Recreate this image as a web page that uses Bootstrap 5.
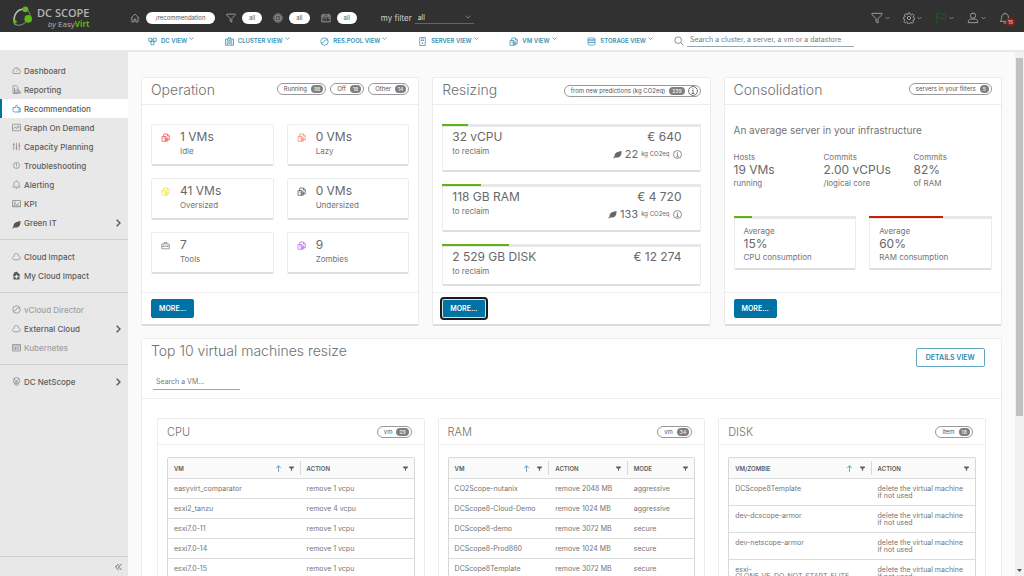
<!DOCTYPE html>
<html lang="en">
<head>
<meta charset="utf-8">
<meta name="viewport" content="width=device-width, initial-scale=1">
<title>DC Scope - Recommendation</title>
<link href="https://cdn.jsdelivr.net/npm/bootstrap@5.3.0/dist/css/bootstrap.min.css" rel="stylesheet">
<style>
:root{--ink:#565656;--line:#ececec;--blue:#0072a3}
body{font-family:Inter,"Liberation Sans",sans-serif;font-size:8px;line-height:14px;color:#747474;background:#fafafa}
.ico{width:9px;height:9px;fill:none;stroke:currentColor;stroke-width:3;flex:none;display:block}
a{color:inherit;text-decoration:none}
button{font-family:inherit}
/* top bar */
.topbar{background:#313131;height:32px;padding:3px 8px 0 12px;color:#a8a8a8}
.brand{width:118px;color:#b5b5b5;font-family:"Open Sans",sans-serif}
.brand-name{font-size:11px;line-height:13px;font-weight:600}
.brand-by{font-size:8px;line-height:10px;text-align:right}
.brand-by b{color:#5eb715}
.crumb{background:#fff;color:#565656;border-radius:6px;height:12px;line-height:12px;font-size:6px;padding:0 7px;margin:0 11px 0 6px;text-align:center}
.crumb-path{min-width:69px}
.crumb-icon{width:10px;height:10px}
.filter-label{font-size:8px;color:#d0d0d0;margin:0 3px 0 13px}
.filter-select{appearance:none;background:transparent url("data:image/svg+xml,%3Csvg xmlns='http://www.w3.org/2000/svg' viewBox='0 0 10 6' fill='none' stroke='%23bbb'%3E%3Cpath d='M1 1l4 4 4-4'/%3E%3C/svg%3E") no-repeat right 3px center/6px 4px;border:0;border-bottom:1px solid #5f666b;color:#ddd;font-size:7px;width:59px;height:13px;padding:0 3px}
.tool{background:none;border:0;padding:0;color:#9c9c9c;width:32px}
.tool .ico{width:12px;height:12px}
.tool .caret{width:5px;height:4px;margin-left:2px}
.tool-alerts{width:17px}
.alerts{background:#8d2012;color:#ddd;font-size:5px;line-height:8px;border-radius:4px;padding:0 2px;left:7px;top:6px}
.flag-on{color:#1f5a22}
/* view bar */
.viewbar{background:#fff;height:20px;border-bottom:2px solid #e9e9e9;padding-left:148px;color:#3b8fb3}
.viewbar a{font-size:6px;font-weight:600;line-height:18px;gap:4px}
.viewbar .caret{width:5px;height:3px;margin-bottom:5px;margin-left:-2px}
.view-links{width:505px}
.search-icon{width:10px;height:10px;margin-left:21px;color:#777}
.line-input{border:0;border-bottom:1px solid #9aa6ab;background:transparent;color:#666;padding:0 3px;border-radius:0;font-size:7px}
.line-input::placeholder{color:#7a7a7a;opacity:1}
.search-all{width:167px;height:12px;margin:0 0 1px 3px;padding-right:12px}
.vm-search{width:87px;margin:12px 0 0 2px}
/* side menu */
.side{width:128px;background:#e8e8e8;color:#5c5c5c}
.side-group{padding:7px 0;border-bottom:1px solid #d0d0d0}
.side-group:first-child{padding-top:9px}
.side-group.last-group{border:0}
.side-group a{height:19px;font-size:8px;font-weight:500;padding:0 6px 0 12px;gap:3px}
.side-group a.active{background:#fff;border-left:2px solid var(--blue);padding-left:10px}
.side-group a.active .ico{color:#3b8fb3}
.side-group a .ico{color:#8a8a8a}
.side-group a .dark{color:#565656}
.side-group a .chev{width:8px;height:8px;stroke-width:1;color:#565656}
.side-group a.off{color:#a0a0a0}
.side-foot{height:20px;border-top:1px solid #d0d0d0;padding:0 6px}
.side-foot .ico{width:7px;height:8px;stroke-width:1}
/* content */
.content{padding:25px 13px;overflow-y:auto;scrollbar-width:none}
.content::-webkit-scrollbar{display:none}
.deck{gap:13px}
.panel{background:#fff;border:1px solid var(--line);border-bottom:2px solid #dcdcdc;border-radius:2px;flex:1 1 0;min-width:0}
.panel-head{padding:0 9px;height:27px;border-bottom:1px solid var(--line)}
.panel-title{font-size:14px;line-height:24px;font-weight:300;color:#707070;margin:0}
.panel-body{padding:19px 9px 18px}
.panel-foot{padding:6px 9px;border-top:1px solid var(--line)}
.pill{border:1px solid #999;border-radius:6px;height:12px;line-height:10px;font-size:6px;padding:0 2px 0 6px;color:#565656;gap:4px}
.pill i{font-style:normal;background:#808080;color:#fff;border-radius:4px;font-size:5px;line-height:8px;padding:0 3px}
.pill .ico{margin-left:-1px;width:10px;height:10px}
.act{font-size:7px;font-weight:600;line-height:17px;padding:0 7px;border:1px solid var(--blue);border-radius:2px;background:var(--blue);color:#fff;min-width:43px}
.act.focused{outline:2px solid #1b1b1b;outline-offset:0;border-color:#cfe3ec}
.act.hollow{background:#fff;color:#2d88ae;border-color:#5fa6c3;min-width:69px;margin-top:9px}
.tiles{display:grid;grid-template-columns:1fr 1fr;gap:12px 13px}
.tile{border:1px solid var(--line);border-bottom:2px solid #dedede;border-radius:2px;background:#fff}
.tile-pad{padding:5px 9px}
.tile-icon{width:19px;padding-top:3px}
.vm-red{color:#f54f47}.vm-orange{color:#ff8a65}.vm-yellow{color:#f5e63a}.vm-grey{color:#565656}.vm-soft{color:#808080}.vm-violet{color:#b56cf0}
.figure-lg{font-size:12px;line-height:14px;color:#686868}
.cap{font-size:8px;line-height:15px}
.meter{height:3px;background:#e8e8e8;margin:-1px -1px 0}
.meter span{display:block;height:2px;background:#60b515}
.meter .hot{background:#c92100}
.gain{padding:3px 18px 6px 9px}
.co2{line-height:20px;gap:3px;color:#686868}
.co2 .figure-lg{font-size:11px}
.co2 small{font-size:6px}
.stack{gap:12px}
.lead-line{font-size:10px;line-height:12px;margin:0 0 15px}
.facts{margin-bottom:27px}
.facts>div{width:90px;flex:none}
.facts>div:last-child{width:auto}
.facts .cap,.usage .cap{line-height:12px}
.usage{padding:6px 9px 5px}
.scroller{width:9px;background:#f1f1f1}
.thumb{width:7px;height:358px;background:#c1c1c1;margin:6px auto 0}
/* tables */
.top-panel{margin-top:12px}
.top-head{padding:0 16px 8px 9px;border-bottom:1px solid var(--line)}
.top-body{padding:19px 15px}
.sub .panel-title{font-size:11px}
.sub .panel-head{height:26px;padding:0 12px 0 9px}
.sub .panel-body{padding:12px 9px}
.grid-table{width:100%;table-layout:fixed;border:1px solid #d8d8d8;border-radius:2px;border-collapse:separate;border-spacing:0;font-size:7px;line-height:7px}
.grid-table th{background:#fafafa;font-size:6px;font-weight:600;padding:3px 0;color:#5c5c5c}
.grid-table th>div{height:14px;padding:0 6px;gap:7px;border-right:1px solid #d8d8d8}
.grid-table th:last-child>div{border:0}
.grid-table th .ico{width:5px;height:5px}
.grid-table th .up{width:7px;height:7px;color:#3b8fb3;stroke-width:4}
.grid-table td{padding:6px 6px;border-top:1px solid #dcdcdc;vertical-align:top;overflow-wrap:anywhere}
</style>
</head>
<body class="vh-100 d-flex flex-column overflow-hidden">
<svg class="d-none" aria-hidden="true">
<symbol id="home" viewBox="0 0 36 36"><path d="M3 19 18 4l15 15M7 16v16h8V22h6v10h8V16"/></symbol>
<symbol id="funnel" viewBox="0 0 36 36"><path d="M3 4h30v4L21 20v13l-6-4V20L3 8z"/></symbol>
<symbol id="target" viewBox="0 0 36 36"><circle cx="18" cy="18" r="15"/><circle cx="18" cy="18" r="10"/><circle cx="18" cy="18" r="4"/></symbol>
<symbol id="calendar" viewBox="0 0 36 36"><path d="M3 7h30v25H3zM3 14h30M10 3v7M26 3v7M9 20h3M17 20h3M25 20h3M9 26h3M17 26h3"/></symbol>
<symbol id="down" viewBox="0 0 10 6"><path stroke-width="1.5" d="M1 1l4 4 4-4"/></symbol>
<symbol id="right" viewBox="0 0 12 12"><path stroke-width="2" d="M4 1l5 5-5 5"/></symbol>
<symbol id="gear" viewBox="0 0 36 36"><path d="M15 3h6l1 5 3 1 4-3 4 4-3 5 1 2 4 1v5l-5 1-1 2 3 4-4 4-5-3-2 1-1 4h-5l-1-5-3-1-4 3-4-4 3-5-1-2-4-1v-5l5-1 1-2-3-4 4-4 5 3 2-1z"/><circle cx="18" cy="18" r="5"/></symbol>
<symbol id="flag" viewBox="0 0 36 36"><path d="M5 34V3h13l2 4h12v14H19l-2-4H5"/></symbol>
<symbol id="user" viewBox="0 0 36 36"><circle cx="18" cy="11" r="8"/><path d="M4 32v-6c3-4 7-5 14-5s11 1 14 5v6z"/></symbol>
<symbol id="bell" viewBox="0 0 36 36"><path d="M3 28c4-3 5-6 5-13 0-6 4-10 10-10s10 4 10 10c0 7 1 10 5 13zM14 31c1 4 7 4 8 0M18 2v3"/></symbol>
<symbol id="search" viewBox="0 0 36 36"><circle cx="15" cy="15" r="12"/><path d="m24 24 10 10"/></symbol>
<symbol id="dc" viewBox="0 0 36 36"><path d="M3 5h12v12H3zM21 5h12v12H21zM12 17h12v14H12zM15 11h6M8 17l4 6M28 17l-4 6"/></symbol>
<symbol id="cluster" viewBox="0 0 36 36"><path d="M2 8h32v25H2zM9 8v25M27 8v25M13 8V3h10v5M15 14h6v13h-6z"/></symbol>
<symbol id="pool" viewBox="0 0 36 36"><circle cx="18" cy="18" r="15"/><path d="M4 23c6 2 12-1 13-6s8-7 15-4"/></symbol>
<symbol id="server" viewBox="0 0 36 36"><path d="M7 2h22v32H7zM12 8h12M12 14h12M18 22v6M15 25h6"/></symbol>
<symbol id="vm" viewBox="0 0 36 36"><path d="M4 14h16v19H4zM11 14V4h15l7 7v16H20M26 4v8h7M9 20h6M17 20h10v12H17z"/></symbol>
<symbol id="storage" viewBox="0 0 36 36"><path d="M4 7c0-5 28-5 28 0v22c0 5-28 5-28 0zM4 7c0 5 28 5 28 0M4 15h28M4 22h28"/></symbol>
<symbol id="gauge" viewBox="0 0 36 36"><path d="M5 30a15 15 0 1 1 26 0zM18 22l8-9M8 20h3M18 9v3"/></symbol>
<symbol id="report" viewBox="0 0 36 36"><path d="M4 3h14l5 6v24H4zM10 12v20M16 16v16M23 18l5 2v12M28 24l5 3v6H4"/></symbol>
<symbol id="thumb" viewBox="0 0 36 36"><path d="M4 14h9l4-10c4 0 5 3 4 10h7v18H8L4 26zM28 16h5v16h-5"/></symbol>
<symbol id="graph" viewBox="0 0 36 36"><path d="M2 5h32v26H2zM6 24l7-9 6 8 5-12 6 10"/></symbol>
<symbol id="sliders" viewBox="0 0 36 36"><path d="M7 3v30M18 3v30M29 3v30M3 11h8M14 23h8M25 14h8"/></symbol>
<symbol id="help" viewBox="0 0 36 36"><circle cx="18" cy="18" r="12"/><path d="M18 10v10M18 23v3"/></symbol>
<symbol id="info" viewBox="0 0 36 36"><circle cx="18" cy="18" r="16"/><path d="M18 8v3M14 15h4v12M13 27h10"/></symbol>
<symbol id="kpi" viewBox="0 0 36 36"><path d="M2 6h32v25H2zM7 12h8M7 17h8M6 26l8-6 6 4 10-10M2 28h32"/></symbol>
<symbol id="leaf" viewBox="0 0 36 36"><path fill="currentColor" stroke="none" d="M2 34c0-5 3-7 4-9C6 10 18 8 34 4c1 17-6 28-22 26-3 0-5 1-8 4z"/></symbol>
<symbol id="cloud" viewBox="0 0 36 36"><path d="M9 31c-9-1-9-11-1-13C8 2 25 1 26 16c9 2 9 14 1 15z"/></symbol>
<symbol id="mycloud" viewBox="0 0 36 36"><path fill="currentColor" fill-rule="evenodd" stroke="none" d="M18 2 34 17h-4v17H6V17H2l6-6V5h6v1zM15 15v5h-5v5h5v5h6v-5h5v-5h-5v-5z"/></symbol>
<symbol id="k8s" viewBox="0 0 36 36"><path d="M2 6h32v26H2zM2 12h32M8 16v12M14 16v12M20 16v12M27 16v12"/></symbol>
<symbol id="net" viewBox="0 0 36 36"><circle cx="18" cy="15" r="13"/><path d="M8 8l9 7 10-7M17 15v11M10 20h16M9 28l9 6 9-6"/></symbol>
<symbol id="tools" viewBox="0 0 36 36"><path d="M3 12h30v19H3zM3 21h30M12 12V6h12v6M10 19v5M26 19v5"/></symbol>
<symbol id="sieve" viewBox="0 0 36 36"><path fill="currentColor" stroke="none" d="M1 4h34v8L22 19v15h-8V19L1 12z"/></symbol>
<symbol id="up" viewBox="0 0 36 36"><path d="M18 35V4M6 16 18 4l12 12"/></symbol>
</svg>

<header class="topbar d-flex align-items-center flex-shrink-0">
  <a href="#" class="brand d-flex">
    <svg width="21" height="22" viewBox="0 0 22 22" fill="none" aria-hidden="true"><path d="M13 3C6 2 2 8 2 15" stroke="#bbb" stroke-width="1.500"/><path d="M2 18c6 4 12 0 15-5" stroke="#999"/><path d="M16 3c3 4 4 7 2 10" stroke="#888"/><circle cx="14" cy="3" r="3" fill="#5eb715"/><circle cx="17" cy="13" r="4" fill="#5eb715"/><circle cx="3" cy="16" r="2" fill="#5eb715"/></svg>
    <span class="ms-1"><span class="d-block brand-name">DC SCOPE</span><span class="d-block brand-by"><em>by</em> Easy<b>Virt</b></span></span>
  </a>
  <svg class="ico crumb-icon"><use href="#home"/></svg><span class="crumb crumb-path">/recommendation</span>
  <svg class="ico crumb-icon"><use href="#funnel"/></svg><span class="crumb">all</span>
  <svg class="ico crumb-icon"><use href="#target"/></svg><span class="crumb">all</span>
  <svg class="ico crumb-icon"><use href="#calendar"/></svg><span class="crumb">all</span>
  <label class="filter-label" for="my-filter">my filter</label>
  <select id="my-filter" class="filter-select"><option>all</option></select>
  <div class="d-flex ms-auto align-items-center">
    <button class="tool d-flex align-items-center" aria-label="Filters"><svg class="ico"><use href="#funnel"/></svg><svg class="ico caret"><use href="#down"/></svg></button>
    <button class="tool d-flex align-items-center" aria-label="Settings"><svg class="ico"><use href="#gear"/></svg><svg class="ico caret"><use href="#down"/></svg></button>
    <button class="tool d-flex align-items-center" aria-label="Language"><svg class="ico flag-on"><use href="#flag"/></svg><svg class="ico caret"><use href="#down"/></svg></button>
    <button class="tool d-flex align-items-center" aria-label="Account"><svg class="ico"><use href="#user"/></svg><svg class="ico caret"><use href="#down"/></svg></button>
    <button class="tool tool-alerts position-relative" aria-label="Alerts"><svg class="ico"><use href="#bell"/></svg><span class="alerts position-absolute">15</span></button>
  </div>
</header>

<nav class="viewbar d-flex align-items-center flex-shrink-0" aria-label="Views">
  <div class="view-links d-flex justify-content-between">
    <a href="#" class="d-flex align-items-center"><svg class="ico"><use href="#dc"/></svg>DC VIEW<svg class="ico caret"><use href="#down"/></svg></a>
    <a href="#" class="d-flex align-items-center"><svg class="ico"><use href="#cluster"/></svg>CLUSTER VIEW<svg class="ico caret"><use href="#down"/></svg></a>
    <a href="#" class="d-flex align-items-center"><svg class="ico"><use href="#pool"/></svg>RES.POOL VIEW<svg class="ico caret"><use href="#down"/></svg></a>
    <a href="#" class="d-flex align-items-center"><svg class="ico"><use href="#server"/></svg>SERVER VIEW<svg class="ico caret"><use href="#down"/></svg></a>
    <a href="#" class="d-flex align-items-center"><svg class="ico"><use href="#vm"/></svg>VM VIEW<svg class="ico caret"><use href="#down"/></svg></a>
    <a href="#" class="d-flex align-items-center"><svg class="ico"><use href="#storage"/></svg>STORAGE VIEW<svg class="ico caret"><use href="#down"/></svg></a>
  </div>
  <svg class="ico search-icon"><use href="#search"/></svg>
  <input class="line-input search-all" type="text" aria-label="Search" placeholder="Search a cluster, a server, a vm or a datastore">
</nav>

<div class="d-flex flex-grow-1 overflow-hidden">
<aside class="side d-flex flex-column flex-shrink-0">
  <div class="side-group">
    <a href="#" class="d-flex align-items-center"><svg class="ico"><use href="#gauge"/></svg>Dashboard</a>
    <a href="#" class="d-flex align-items-center"><svg class="ico"><use href="#report"/></svg>Reporting</a>
    <a href="#" class="d-flex align-items-center active" aria-current="page"><svg class="ico"><use href="#thumb"/></svg>Recommendation</a>
    <a href="#" class="d-flex align-items-center"><svg class="ico"><use href="#graph"/></svg>Graph On Demand</a>
    <a href="#" class="d-flex align-items-center"><svg class="ico"><use href="#sliders"/></svg>Capacity Planning</a>
    <a href="#" class="d-flex align-items-center"><svg class="ico"><use href="#help"/></svg>Troubleshooting</a>
    <a href="#" class="d-flex align-items-center"><svg class="ico"><use href="#bell"/></svg>Alerting</a>
    <a href="#" class="d-flex align-items-center"><svg class="ico"><use href="#kpi"/></svg>KPI</a>
    <a href="#" class="d-flex align-items-center"><svg class="ico dark mt-1"><use href="#leaf"/></svg>Green IT<svg class="ico chev ms-auto"><use href="#right"/></svg></a>
  </div>
  <div class="side-group">
    <a href="#" class="d-flex align-items-center"><svg class="ico"><use href="#cloud"/></svg>Cloud Impact</a>
    <a href="#" class="d-flex align-items-center"><svg class="ico dark"><use href="#mycloud"/></svg>My Cloud Impact</a>
  </div>
  <div class="side-group">
    <a href="#" class="d-flex align-items-center off"><svg class="ico"><use href="#pool"/></svg>vCloud Director</a>
    <a href="#" class="d-flex align-items-center"><svg class="ico"><use href="#cloud"/></svg>External Cloud<svg class="ico chev ms-auto"><use href="#right"/></svg></a>
    <a href="#" class="d-flex align-items-center off"><svg class="ico"><use href="#k8s"/></svg>Kubernetes</a>
  </div>
  <div class="side-group last-group">
    <a href="#" class="d-flex align-items-center"><svg class="ico"><use href="#net"/></svg>DC NetScope<svg class="ico chev ms-auto"><use href="#right"/></svg></a>
  </div>
  <div class="side-foot mt-auto d-flex align-items-center justify-content-end">
    <button class="border-0 bg-transparent p-0" aria-label="Collapse menu"><svg class="ico" viewBox="0 0 12 12"><path d="M6 1 1 6l5 5M11 1 6 6l5 5"/></svg></button>
  </div>
</aside>

<main class="content flex-grow-1">
  <div class="deck d-flex">
    <section class="panel d-flex flex-column">
      <div class="panel-head d-flex justify-content-between"><h2 class="panel-title">Operation</h2>
        <div class="d-flex align-items-center gap-1 pb-1"><span class="pill d-flex align-items-center">Running <i>98</i></span><span class="pill d-flex align-items-center">Off <i>18</i></span><span class="pill d-flex align-items-center">Other <i>14</i></span></div></div>
      <div class="panel-body flex-grow-1"><div class="tiles">
        <div class="tile tile-pad d-flex"><div class="tile-icon"><svg class="ico vm-red"><use href="#vm"/></svg></div><div><div class="figure-lg">1 VMs</div><div class="cap">Idle</div></div></div>
        <div class="tile tile-pad d-flex"><div class="tile-icon"><svg class="ico vm-orange"><use href="#vm"/></svg></div><div><div class="figure-lg">0 VMs</div><div class="cap">Lazy</div></div></div>
        <div class="tile tile-pad d-flex"><div class="tile-icon"><svg class="ico vm-yellow"><use href="#vm"/></svg></div><div><div class="figure-lg">41 VMs</div><div class="cap">Oversized</div></div></div>
        <div class="tile tile-pad d-flex"><div class="tile-icon"><svg class="ico vm-grey"><use href="#vm"/></svg></div><div><div class="figure-lg">0 VMs</div><div class="cap">Undersized</div></div></div>
        <div class="tile tile-pad d-flex"><div class="tile-icon"><svg class="ico vm-soft"><use href="#tools"/></svg></div><div><div class="figure-lg">7</div><div class="cap">Tools</div></div></div>
        <div class="tile tile-pad d-flex"><div class="tile-icon"><svg class="ico vm-violet"><use href="#vm"/></svg></div><div><div class="figure-lg">9</div><div class="cap">Zombies</div></div></div>
      </div></div>
      <div class="panel-foot d-flex"><button class="act">MORE...</button></div>
    </section>

    <section class="panel d-flex flex-column">
      <div class="panel-head d-flex justify-content-between"><h2 class="panel-title">Resizing</h2>
        <div class="d-flex align-items-center"><span class="pill d-flex align-items-center">from new predictions (kg CO2eq) <i>239</i><svg class="ico"><use href="#info"/></svg></span></div></div>
      <div class="panel-body flex-grow-1 pb-1"><div class="stack d-flex flex-column">
        <div class="tile"><div class="meter"><span style="width:10%"></span></div><div class="gain d-flex justify-content-between"><div><div class="figure-lg">32 vCPU</div><div>to reclaim</div></div><div class="text-end"><div class="figure-lg">€ 640</div><div class="co2 d-flex align-items-center justify-content-end"><svg class="ico"><use href="#leaf"/></svg><span class="figure-lg">22</span><small>kg CO2eq</small><svg class="ico"><use href="#info"/></svg></div></div></div></div>
        <div class="tile"><div class="meter"><span style="width:15%"></span></div><div class="gain d-flex justify-content-between"><div><div class="figure-lg">118 GB RAM</div><div>to reclaim</div></div><div class="text-end"><div class="figure-lg">€ 4 720</div><div class="co2 d-flex align-items-center justify-content-end"><svg class="ico"><use href="#leaf"/></svg><span class="figure-lg">133</span><small>kg CO2eq</small><svg class="ico"><use href="#info"/></svg></div></div></div></div>
        <div class="tile"><div class="meter"><span style="width:26%"></span></div><div class="gain d-flex justify-content-between"><div><div class="figure-lg">2 529 GB DISK</div><div>to reclaim</div></div><div class="figure-lg">€ 12 274</div></div></div>
      </div></div>
      <div class="panel-foot d-flex"><button class="act focused">MORE...</button></div>
    </section>

    <section class="panel d-flex flex-column">
      <div class="panel-head d-flex justify-content-between"><h2 class="panel-title">Consolidation</h2>
        <div class="d-flex align-items-center pb-1"><span class="pill d-flex align-items-center">servers in your filters <i>5</i></span></div></div>
      <div class="panel-body flex-grow-1">
        <p class="lead-line">An average server in your infrastructure</p>
        <div class="facts d-flex">
          <div><div class="cap">Hosts</div><div class="figure-lg">19 VMs</div><div class="cap">running</div></div>
          <div><div class="cap">Commits</div><div class="figure-lg">2.00 vCPUs</div><div class="cap">/logical core</div></div>
          <div><div class="cap">Commits</div><div class="figure-lg">82%</div><div class="cap">of RAM</div></div>
        </div>
        <div class="tiles">
          <div class="tile"><div class="meter"><span style="width:15%"></span></div><div class="usage"><div class="cap">Average</div><div class="figure-lg">15%</div><div class="cap">CPU consumption</div></div></div>
          <div class="tile"><div class="meter"><span class="hot" style="width:60%"></span></div><div class="usage"><div class="cap">Average</div><div class="figure-lg">60%</div><div class="cap">RAM consumption</div></div></div>
        </div>
      </div>
      <div class="panel-foot d-flex"><button class="act">MORE...</button></div>
    </section>
  </div>

  <section class="panel top-panel">
    <div class="top-head d-flex justify-content-between align-items-start">
      <div><h2 class="panel-title">Top 10 virtual machines resize</h2><input class="line-input d-block vm-search" type="text" aria-label="Search a VM" placeholder="Search a VM..."></div>
      <button class="act hollow">DETAILS VIEW</button>
    </div>
    <div class="top-body deck d-flex">
      <section class="panel sub">
        <div class="panel-head d-flex justify-content-between align-items-center"><h3 class="panel-title">CPU</h3><span class="pill d-flex align-items-center">vm <i>29</i></span></div>
        <div class="panel-body"><table class="grid-table">
          <colgroup><col style="width:54%"><col></colgroup>
          <thead><tr><th><div class="d-flex align-items-center"><span class="me-auto">VM</span><svg class="ico up"><use href="#up"/></svg><svg class="ico"><use href="#sieve"/></svg></div></th><th><div class="d-flex align-items-center"><span class="me-auto">ACTION</span><svg class="ico"><use href="#sieve"/></svg></div></th></tr></thead>
          <tbody>
            <tr><td>easyvirt_comparator</td><td>remove 1 vcpu</td></tr>
            <tr><td>esxi2_tanzu</td><td>remove 4 vcpu</td></tr>
            <tr><td>esxi7.0-11</td><td>remove 1 vcpu</td></tr>
            <tr><td>esxi7.0-14</td><td>remove 1 vcpu</td></tr>
            <tr><td>esxi7.0-15</td><td>remove 1 vcpu</td></tr>
          </tbody></table></div>
      </section>
      <section class="panel sub">
        <div class="panel-head d-flex justify-content-between align-items-center"><h3 class="panel-title">RAM</h3><span class="pill d-flex align-items-center">vm <i>34</i></span></div>
        <div class="panel-body"><table class="grid-table">
          <colgroup><col style="width:41%"><col style="width:32%"><col></colgroup>
          <thead><tr><th><div class="d-flex align-items-center"><span class="me-auto">VM</span><svg class="ico up"><use href="#up"/></svg><svg class="ico"><use href="#sieve"/></svg></div></th><th><div class="d-flex align-items-center"><span class="me-auto">ACTION</span><svg class="ico"><use href="#sieve"/></svg></div></th><th><div class="d-flex align-items-center"><span class="me-auto">MODE</span><svg class="ico"><use href="#sieve"/></svg></div></th></tr></thead>
          <tbody>
            <tr><td>CO2Scope-nutanix</td><td>remove 2048 MB</td><td>aggressive</td></tr>
            <tr><td>DCScope8-Cloud-Demo</td><td>remove 1024 MB</td><td>aggressive</td></tr>
            <tr><td>DCScope8-demo</td><td>remove 3072 MB</td><td>secure</td></tr>
            <tr><td>DCScope8-Prod860</td><td>remove 1024 MB</td><td>secure</td></tr>
            <tr><td>DCScope8Template</td><td>remove 3072 MB</td><td>secure</td></tr>
          </tbody></table></div>
      </section>
      <section class="panel sub">
        <div class="panel-head d-flex justify-content-between align-items-center"><h3 class="panel-title">DISK</h3><span class="pill d-flex align-items-center">item <i>18</i></span></div>
        <div class="panel-body"><table class="grid-table">
          <colgroup><col style="width:58%"><col></colgroup>
          <thead><tr><th><div class="d-flex align-items-center"><span class="me-auto">VM/ZOMBIE</span><svg class="ico up"><use href="#up"/></svg><svg class="ico"><use href="#sieve"/></svg></div></th><th><div class="d-flex align-items-center"><span class="me-auto">ACTION</span><svg class="ico"><use href="#sieve"/></svg></div></th></tr></thead>
          <tbody>
            <tr><td>DCScope8Template</td><td>delete the virtual machine if not used</td></tr>
            <tr><td>dev-dcscope-armor</td><td>delete the virtual machine if not used</td></tr>
            <tr><td>dev-netscope-armor</td><td>delete the virtual machine if not used</td></tr>
            <tr><td>esxi-<br>CLONE_VE_DO_NOT_START_ELITE</td><td>delete the virtual machine if not used</td></tr>
          </tbody></table></div>
      </section>
    </div>
  </section>
</main>
<div class="scroller flex-shrink-0 d-flex flex-column" aria-hidden="true"><div class="thumb"></div><svg class="mt-auto mx-auto mb-1" width="5" height="3" viewBox="0 0 5 3"><path d="M0 0h5L2.500 3z" fill="#555"/></svg></div>
</div>
<script src="https://cdn.jsdelivr.net/npm/bootstrap@5.3.0/dist/js/bootstrap.bundle.min.js"></script>
</body>
</html>
